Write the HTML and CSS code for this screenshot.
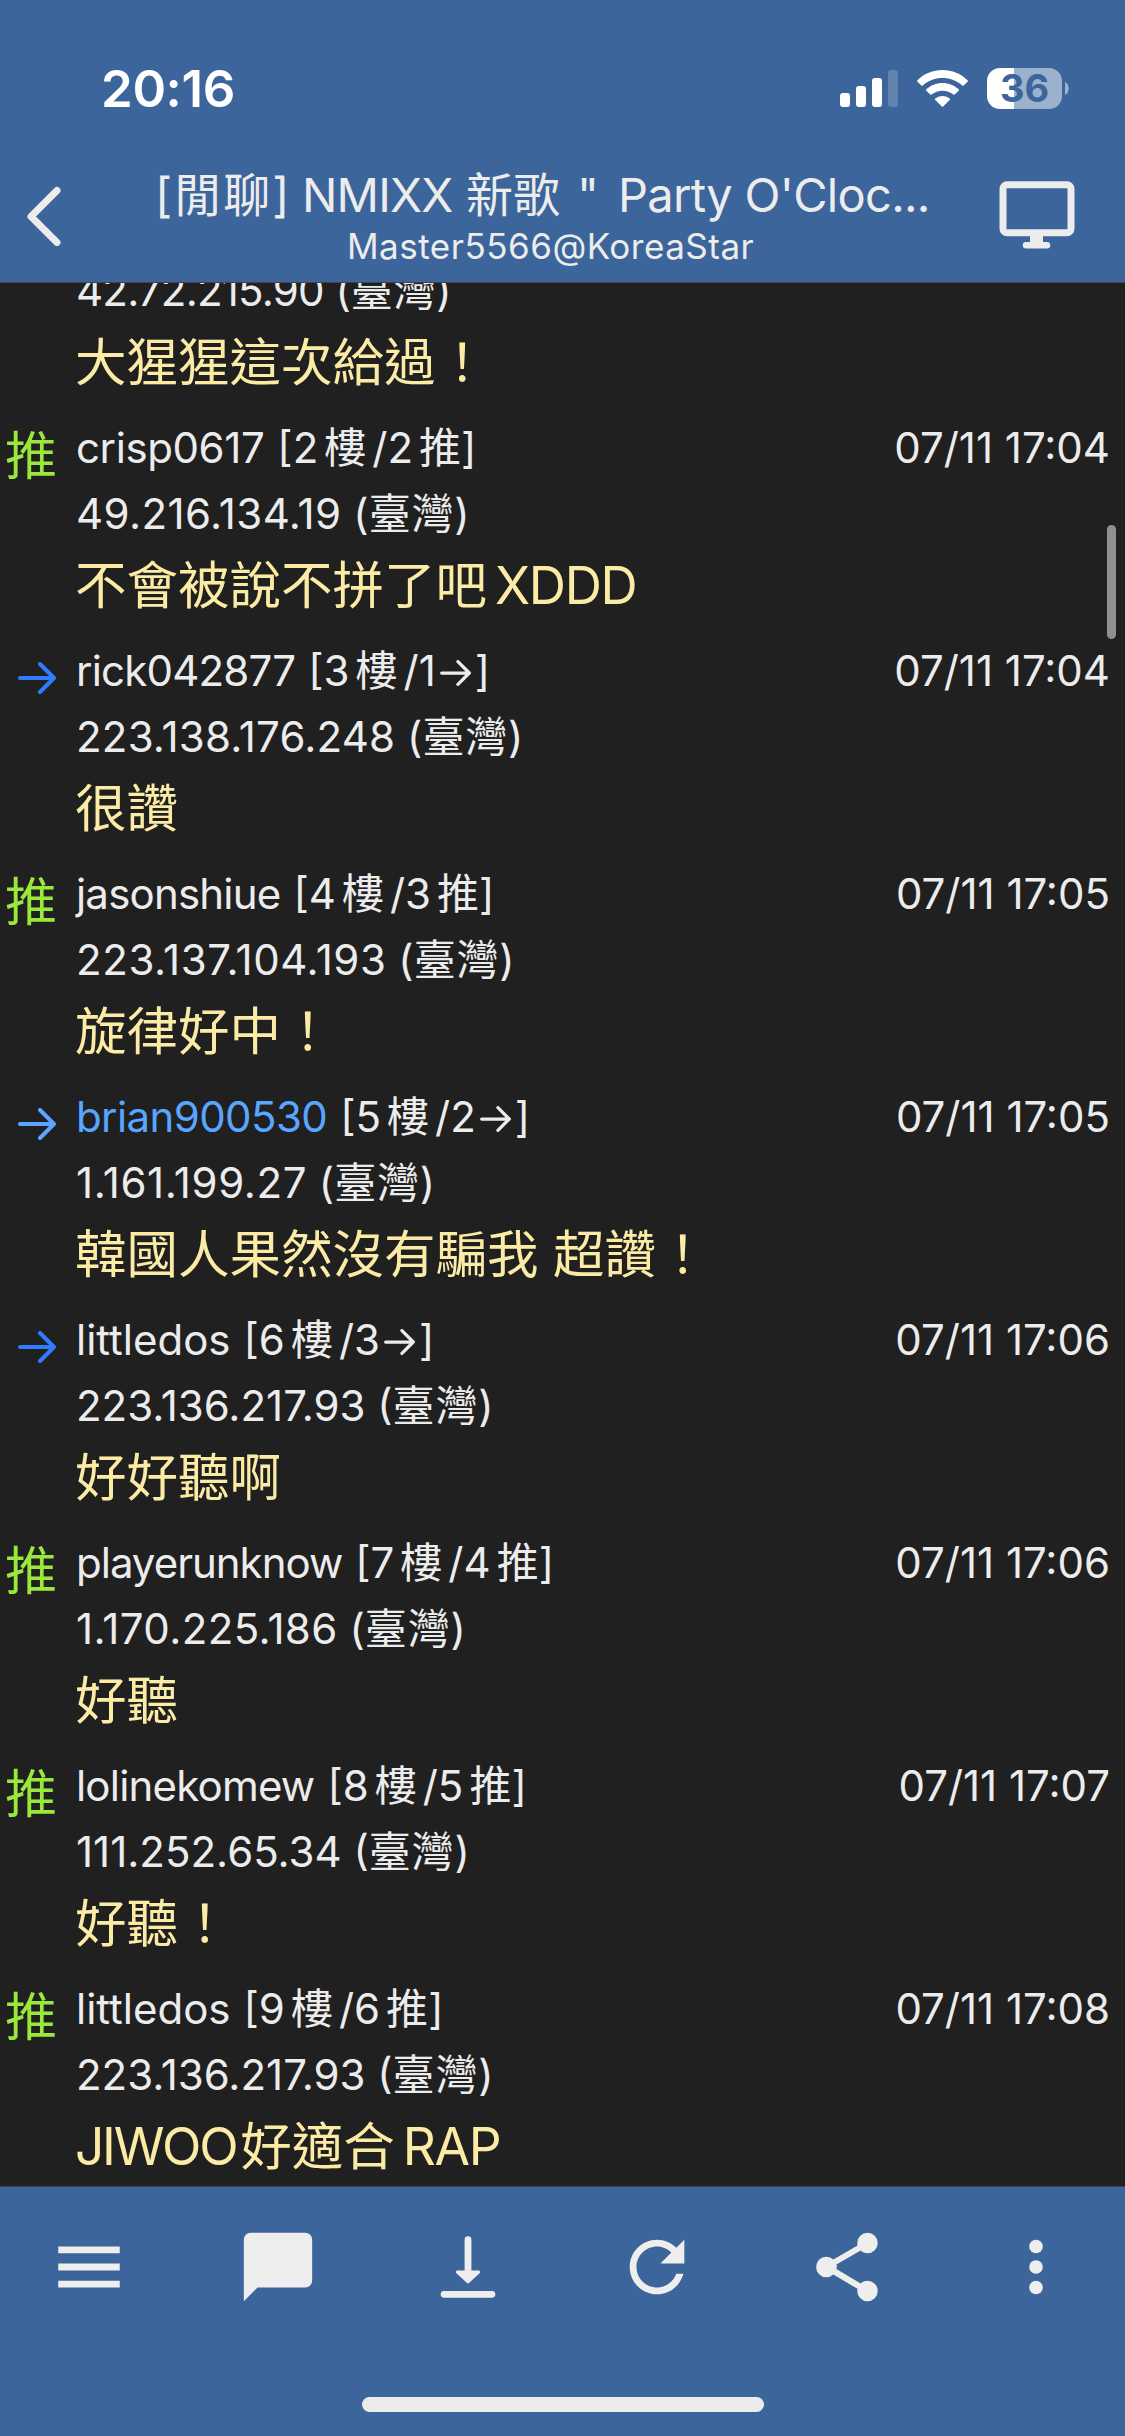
FILE: index.html
```html
<!DOCTYPE html>
<html lang="zh-Hant">
<head>
<meta charset="utf-8">
<title>NMIXX 新歌</title>
<link rel="stylesheet" href="styles.css">
</head>
<body>
<header class="top">
  <div class="status">
    <span class="clock">20:16</span>
    <div class="indicators">
      <svg class="signal" viewBox="0 0 58 37"><rect y="23" width="10" height="14" rx="3"/><rect x="16" y="16" width="10" height="21" rx="3"/><rect x="32" y="8" width="10" height="29" rx="3"/><rect class="dim" x="48" width="10" height="37" rx="3"/></svg>
      <svg class="wifi" viewBox="0 0 51 37"><path d="M25.500 0C35 0 44 3.700 50.600 10.200Q51.300 11 50.600 11.700L46.600 15.500Q46 16 45.300 15.500C39.700 10.500 32.900 8 25.500 8S11.300 10.500 5.700 15.500Q5 16 4.400 15.500L.4 11.700Q-.3 11 .4 10.200C7 3.700 16 0 25.500 0Z"/><path d="M25.500 13C31.700 13 37.400 15.300 41.700 19.300Q42.500 20 41.700 20.700L37.700 24.500Q37 25 36.400 24.500C33.300 22 29.500 20.700 25.500 20.700S17.700 22 14.600 24.500Q14 25 13.300 24.500L9.300 20.700Q8.500 20 9.300 19.300C13.600 15.300 19.300 13 25.500 13Z"/><path d="M25.500 26C28.200 26 30.700 26.900 32.700 28.500Q33.400 29.200 32.700 30L26.200 36.500Q25.500 37.100 24.800 36.500L18.300 30Q17.600 29.200 18.300 28.500C20.300 26.900 22.800 26 25.500 26Z"/></svg>
      <div class="battery"><div class="cell">36</div><svg class="nub" viewBox="0 0 4 13"><path d="M0 0C5 2 5 11 0 13Z"/></svg></div>
    </div>
  </div>
  <div class="nav">
    <svg class="back" viewBox="0 0 36 60"><path d="M31 4.500 5 30.500l26 26"/></svg>
    <div class="heading">
      <h1 class="title"><span class="t1">[閒聊]</span><span class="t2">NMIXX</span><span class="t3">新歌</span><span class="t4">"</span><span class="t5">Party O'Cloc...</span></h1>
      <div class="author">Master5566@KoreaStar</div>
    </div>
    <svg class="screen" viewBox="0 0 76 68"><rect x="4" y="3.800" width="68" height="48" rx="4"/><path class="solid" d="M31 54h13v7h4a3 3 0 0 1 0 6.500H27a3 3 0 0 1 0-6.500h4Z"/></svg>
  </div>
</header>

<main class="list">
  <div class="comments">
    <article class="row"><div class="mark"></div><div class="body"><div class="meta"></div><div class="ip"><span class="n8">42.72.215.90</span> (<span class="han">臺灣</span>)</div><p class="text">大猩猩這次給過<span class="bang">！</span></p></div></article>
    <article class="row"><div class="mark">推</div><div class="body"><div class="meta"><span class="user n4">crisp0617</span><span class="floor">[2<i class="han">樓</i>/2<i class="han">推</i>]</span><time>07/11 17:04</time></div><div class="ip"><span class="w4">49.216.134.19</span> (<span class="han">臺灣</span>)</div><p class="text">不會被說不拼了吧<span class="latin">XDDD</span></p></div></article>
    <article class="row"><svg class="arrow" viewBox="0 0 38 32"><path d="M2 16h34M22 2l14 14-14 14"/></svg><div class="body"><div class="meta"><span class="user n8">rick042877</span><span class="floor">[3<i class="han">樓</i>/1<svg class="mini" viewBox="0 0 38 32"><path d="M2 16h34M22 2l14 14-14 14"/></svg>]</span><time>07/11 17:04</time></div><div class="ip"><span class="w2">223.138.176.248</span> (<span class="han">臺灣</span>)</div><p class="text">很讚</p></div></article>
    <article class="row"><div class="mark">推</div><div class="body"><div class="meta"><span class="user n8">jasonshiue</span><span class="floor">[4<i class="han">樓</i>/3<i class="han">推</i>]</span><time>07/11 17:05</time></div><div class="ip"><span class="w6">223.137.104.193</span> (<span class="han">臺灣</span>)</div><p class="text">旋律好中<span class="bang">！</span></p></div></article>
    <article class="row own"><svg class="arrow" viewBox="0 0 38 32"><path d="M2 16h34M22 2l14 14-14 14"/></svg><div class="body"><div class="meta"><span class="user n6">brian900530</span><span class="floor">[5<i class="han">樓</i>/2<svg class="mini" viewBox="0 0 38 32"><path d="M2 16h34M22 2l14 14-14 14"/></svg>]</span><time>07/11 17:05</time></div><div class="ip"><span class="w6">1.161.199.27</span> (<span class="han">臺灣</span>)</div><p class="text">韓國人果然沒有騙我 超讚<span class="bang">！</span></p></div></article>
    <article class="row"><svg class="arrow" viewBox="0 0 38 32"><path d="M2 16h34M22 2l14 14-14 14"/></svg><div class="body"><div class="meta"><span class="user">littledos</span><span class="floor">[6<i class="han">樓</i>/3<svg class="mini" viewBox="0 0 38 32"><path d="M2 16h34M22 2l14 14-14 14"/></svg>]</span><time>07/11 17:06</time></div><div class="ip">223.136.217.93 (<span class="han">臺灣</span>)</div><p class="text">好好聽啊</p></div></article>
    <article class="row"><div class="mark">推</div><div class="body"><div class="meta"><span class="user n10">playerunknow</span><span class="floor">[7<i class="han">樓</i>/4<i class="han">推</i>]</span><time>07/11 17:06</time></div><div class="ip"><span class="w4">1.170.225.186</span> (<span class="han">臺灣</span>)</div><p class="text">好聽</p></div></article>
    <article class="row"><div class="mark">推</div><div class="body"><div class="meta"><span class="user n8">lolinekomew</span><span class="floor">[8<i class="han">樓</i>/5<i class="han">推</i>]</span><time>07/11 17:07</time></div><div class="ip">111.252.65.34 (<span class="han">臺灣</span>)</div><p class="text">好聽<span class="bang">！</span></p></div></article>
    <article class="row"><div class="mark">推</div><div class="body"><div class="meta"><span class="user">littledos</span><span class="floor">[9<i class="han">樓</i>/6<i class="han">推</i>]</span><time>07/11 17:08</time></div><div class="ip">223.136.217.93 (<span class="han">臺灣</span>)</div><p class="text"><span class="latin lead">JIWOO</span>好適合<span class="latin">RAP</span></p></div></article>
  </div>
  <div class="scrollbar"></div>
</main>

<footer class="bottom">
  <nav class="tools">
    <svg viewBox="0 0 24 24"><path d="M3 6h18v2H3zM3 11h18v2H3zM3 16h18v2H3z"/></svg>
    <svg viewBox="0 0 24 24"><path d="M4 2h16a2 2 0 0 1 2 2v12a2 2 0 0 1-2 2H6l-4 4V4a2 2 0 0 1 2-2z"/></svg>
    <svg viewBox="0 0 24 24"><path d="M12 3a1 1 0 0 1 1 1v9h1.900a.5.5 0 0 1 .4.900L12.300 16.700a.5.5 0 0 1-.6 0L8.700 13.900a.5.5 0 0 1 .4-.900H11V4a1 1 0 0 1 1-1zM5 19h14a1 1 0 0 1 0 2H5a1 1 0 0 1 0-2z"/></svg>
    <svg viewBox="0 0 24 24"><path d="M17.650 6.350C16.200 4.900 14.210 4 12 4c-4.420 0-7.990 3.580-7.990 8s3.570 8 7.990 8c3.730 0 6.840-2.550 7.730-6h-2.080c-.82 2.330-3.040 4-5.650 4-3.310 0-6-2.690-6-6s2.690-6 6-6c1.660 0 3.140.69 4.220 1.780L13 11h7V4l-2.350 2.350z"/></svg>
    <svg viewBox="0 0 24 24"><path d="M18 16c-.8 0-1.500.3-2 .8l-7.100-4.200c.1-.2.100-.4.100-.6s0-.5-.1-.7L16 7.200c.5.500 1.200.8 2 .8a3 3 0 1 0-3-3c0 .2 0 .5.100.7L8 9.800A3 3 0 1 0 8 14.200l7.100 4.200c-.1.200-.1.400-.1.600a3 3 0 1 0 3-3z"/></svg>
    <svg viewBox="0 0 24 24"><circle cx="12" cy="6" r="2"/><circle cx="12" cy="12" r="2"/><circle cx="12" cy="18" r="2"/></svg>
  </nav>
  <div class="home"></div>
</footer>
</body>
</html>
```
FILE: styles.css
```css
* { box-sizing: border-box; }
body {
  margin: 0;
  width: 1125px;
  height: 2436px;
  display: flex;
  flex-direction: column;
  overflow: hidden;
  background: #202020;
  color: #ececec;
  font-family: Inter, "Noto Sans CJK TC", sans-serif;
  font-size: 42px;
}
svg { display: block; flex: none; }

/* Header */
.top { flex: none; height: 282px; background: #3c659b; display: flex; flex-direction: column; }
.status {
  height: 162px;
  padding: 62px 56px 0 101px;
  display: flex;
  justify-content: space-between;
  align-items: flex-start;
  color: #fff;
}
.clock { font-size: 51px; font-weight: 600; line-height: 54px; letter-spacing: -.4px; }
.indicators { display: flex; align-items: center; padding-top: 6px; height: 47px; }
.signal { width: 58px; height: 37px; fill: #fff; }
.dim { opacity: .2; }
.wifi { width: 51px; height: 37px; margin: 0 19px; fill: #fff; }
.battery { display: flex; align-items: center; gap: 3px; }
.cell {
  width: 75px;
  height: 41px;
  border-radius: 13px;
  background: linear-gradient(90deg, #fff 27px, #9bb1cc 27px);
  color: #3c659b;
  font-size: 38px;
  font-weight: 700;
  line-height: 41px;
  text-align: center;
}
.nub { width: 4px; height: 13px; fill: #9bb1cc; }
.nav { height: 120px; padding: 0 50px 0 26px; display: flex; }
.back { width: 36px; height: 60px; margin-top: 24px; }
.back path { fill: none; stroke: #ececec; stroke-width: 7; stroke-linecap: round; stroke-linejoin: round; }
.heading { flex: 1; margin-left: 93px; }
.title { margin: 0; display: flex; font-size: 47px; font-weight: 400; line-height: 60px; height: 62px; padding-top: 3px; white-space: pre; }
.author { margin-left: 192px; font-size: 35px; line-height: 44px; letter-spacing: .5px; }
.t1 { width: 147px; letter-spacing: 2px; }
.t2 { width: 164px; letter-spacing: -.8px; }
.t3 { width: 111px; }
.t4 { width: 41px; }
.t5 { letter-spacing: -.7px; }
.screen { width: 76px; height: 68px; margin-top: 19px; }
.screen rect { fill: none; stroke: #ececec; stroke-width: 7; }
.solid { fill: #ececec; }

/* Comment list */
.list { position: relative; flex: 1; min-height: 0; overflow: hidden; border-top: 1px solid #444; border-bottom: 1px solid #444; }
.comments { margin-top: -91px; }
.row { height: 223px; display: flex; }
.mark { width: 76px; padding: 5px 0 0 5px; font-size: 52px; line-height: 74px; color: #9be83c; }
.arrow { width: 38px; height: 32px; margin: 24px 20px 0 18px; color: #2f7dff; }
.arrow path, .mini path { fill: none; stroke: currentColor; stroke-width: 4; stroke-linecap: round; stroke-linejoin: round; }
.body { flex: 1; padding-right: 15px; }
.meta { display: flex; height: 66px; line-height: 66px; white-space: nowrap; }
.user { margin-right: 13px; }
.own .user, .own .arrow { color: #58a6ff; }
.floor { display: flex; }
.floor .han { margin: 0 6px; font-style: normal; }
.floor .han:last-child { margin-right: 0; }
.mini { width: 31px; height: 26px; margin: 22px 4px 0 4px; }
.meta time { margin-left: auto; }
.ip { height: 66px; line-height: 66px; }
.ip .han { letter-spacing: .8px; }
.text { margin: 0 0 0 -1px; height: 75px; font-size: 51.500px; line-height: 77px; color: #fbeba4; }
.bang { margin-left: 1px; }
.latin { margin-left: 8px; letter-spacing: -1.300px; }
.lead { margin: 0 4px 0 0; letter-spacing: -2.300px; }
.scrollbar { position: absolute; top: 242px; right: 9px; width: 9px; height: 114px; border-radius: 5px; background: #8f8f8f; }

/* Tracking steps: n = narrower, w = wider, in tenths of a pixel */
.n4 { letter-spacing: -.4px; }
.n6 { letter-spacing: -.6px; }
.n8 { letter-spacing: -.8px; }
.n10 { letter-spacing: -1px; }
.w2 { letter-spacing: .2px; }
.w4 { letter-spacing: .4px; }
.w6 { letter-spacing: .6px; }

/* Toolbar */
.bottom { flex: none; height: 249px; padding-top: 39px; background: #3c659b; display: flex; flex-direction: column; align-items: center; }
.tools { align-self: stretch; display: flex; justify-content: space-between; padding: 0 48px; }
.tools svg { width: 82px; height: 82px; fill: #eee; }
.home { width: 402px; height: 15px; margin-top: 89px; border-radius: 8px; background: #ececec; }
```
